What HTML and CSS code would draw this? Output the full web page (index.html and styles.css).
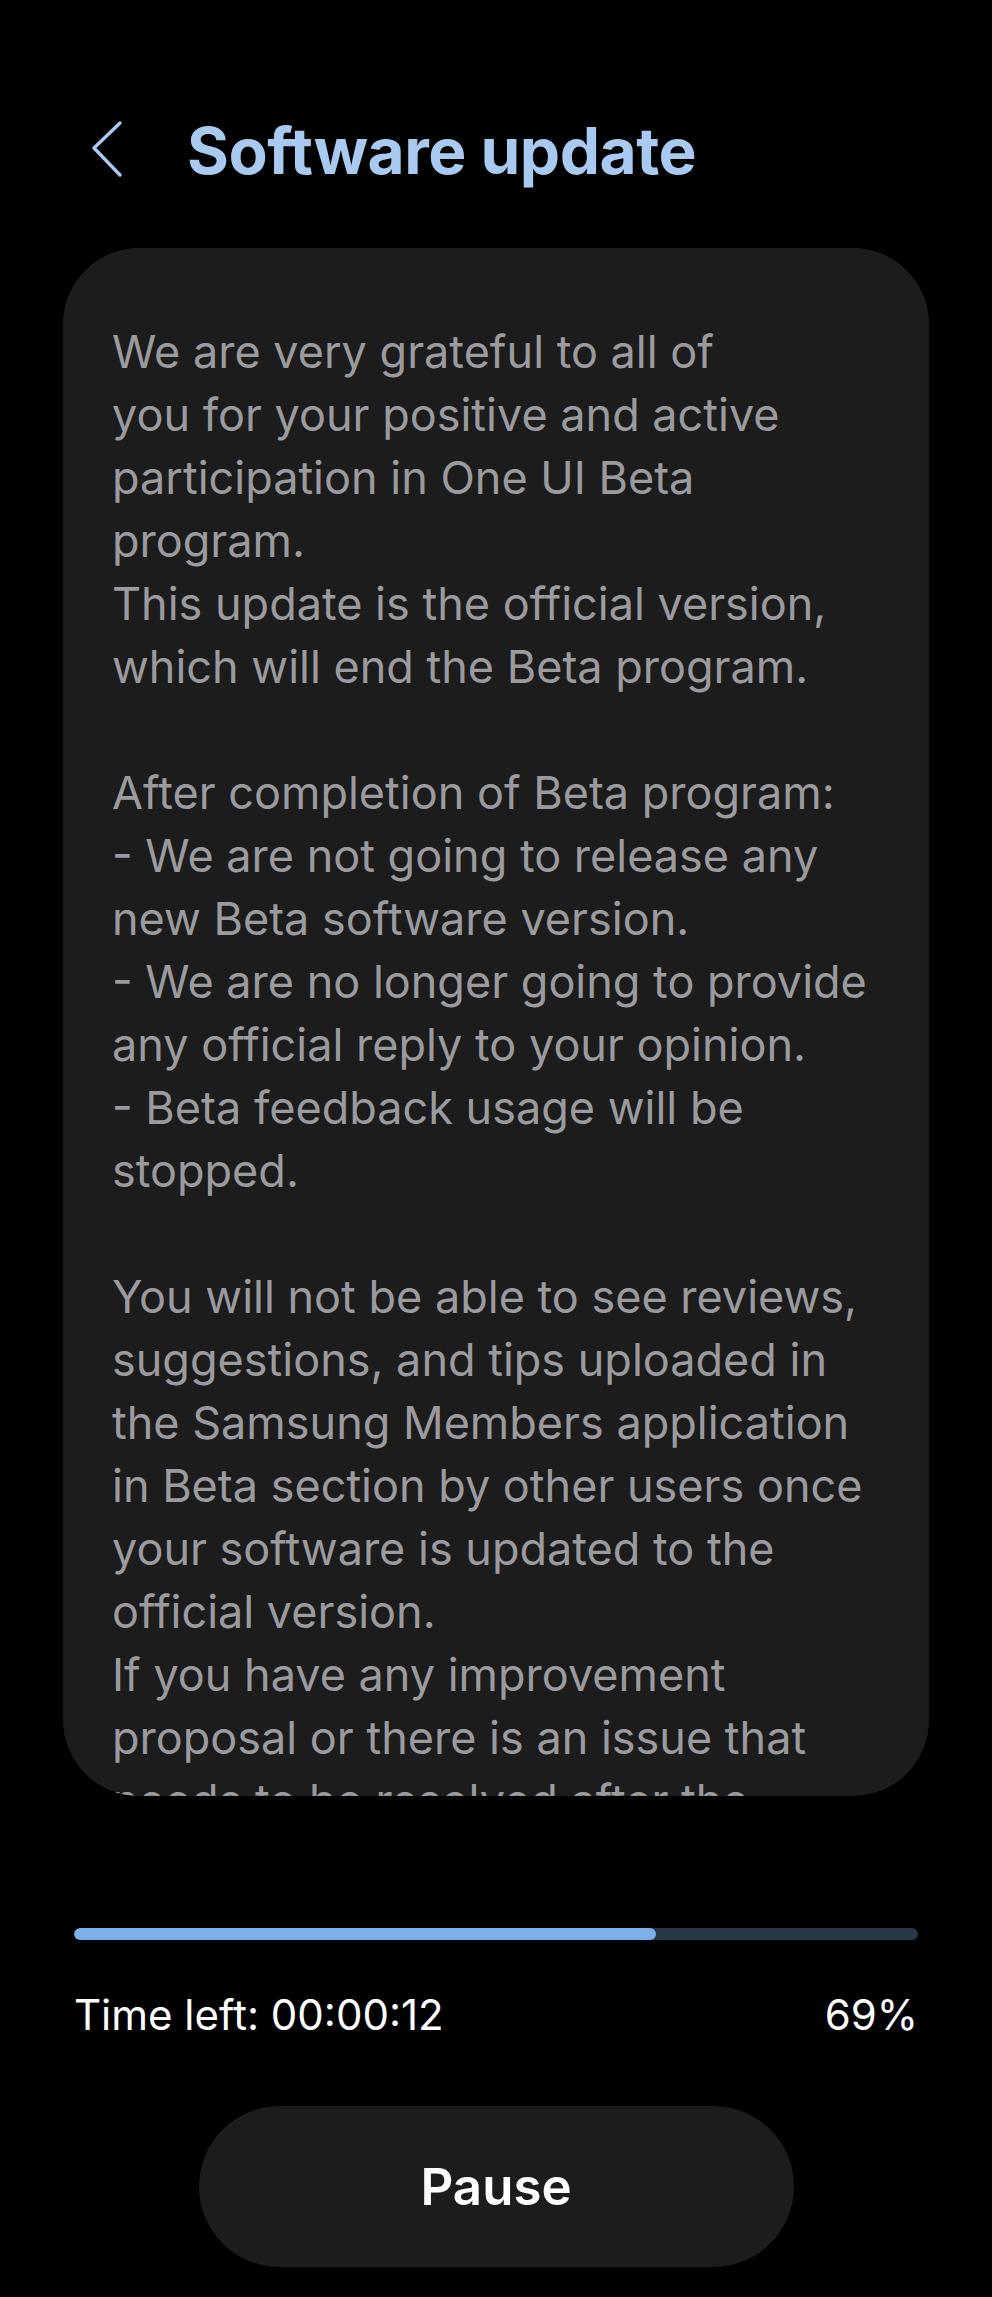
FILE: index.html
```html
<!DOCTYPE html>
<html lang="en">

<head>
    <meta charset="UTF-8">
    <meta name="viewport" content="width=device-width, initial-scale=1.0">
    <title>Software update</title>
    <link rel="stylesheet" href="styles.css">
</head>

<body>
    <div class="screen">
        <header class="app-bar">
            <button class="back-button" aria-label="Back">
                <svg width="40" height="60" viewBox="0 0 40 60">
                    <polyline points="29,3 3,28 29,55" fill="none" stroke="#a8c9f0" stroke-width="3.4" stroke-linecap="round" stroke-linejoin="round" />
                </svg>
            </button>
            <h1>Software update</h1>
        </header>

        <div class="notes-card">
            <div class="notes-text">
                <span>We are very grateful to all of</span>
                <span>you for your positive and active</span>
                <span>participation in One UI Beta</span>
                <span>program.</span>
                <span>This update is the official version,</span>
                <span>which will end the Beta program.</span>
                <span>&nbsp;</span>
                <span>After completion of Beta program:</span>
                <span>- We are not going to release any</span>
                <span>new Beta software version.</span>
                <span>- We are no longer going to provide</span>
                <span>any official reply to your opinion.</span>
                <span>- Beta feedback usage will be</span>
                <span>stopped.</span>
                <span>&nbsp;</span>
                <span>You will not be able to see reviews,</span>
                <span>suggestions, and tips uploaded in</span>
                <span>the Samsung Members application</span>
                <span>in Beta section by other users once</span>
                <span>your software is updated to the</span>
                <span>official version.</span>
                <span>If you have any improvement</span>
                <span>proposal or there is an issue that</span>
                <span>needs to be resolved after the</span>
            </div>
        </div>

        <div class="progress">
            <div class="progress-track">
                <div class="progress-fill" style="width: 69%"></div>
            </div>
            <div class="progress-info">
                <span>Time left: 00:00:12</span>
                <span>69%</span>
            </div>
        </div>

        <div class="actions">
            <button class="pause-button">Pause</button>
        </div>
    </div>
</body>

</html>
```

FILE: styles.css
```css
* {
    box-sizing: border-box;
    font-family: 'Inter', 'Roboto', sans-serif;
}

body {
    margin: 0;
    background-color: #000;
    color: #fff;
}

.screen {
    width: 992px;
    height: 2297px;
    display: flex;
    flex-direction: column;
    padding: 0 63px;
}

.app-bar {
    display: flex;
    align-items: center;
    height: 248px;
    padding-top: 52px;
    padding-left: 28px;
}

.back-button {
    background: transparent;
    border: none;
    padding: 0;
    width: 40px;
    height: 60px;
    margin-right: 56px;
    cursor: pointer;
}

.back-button svg {
    display: block;
}

h1 {
    margin: 0;
    font-size: 64px;
    font-weight: 700;
    color: #a8c9f0;
    letter-spacing: -0.5px;
}

.notes-card {
    height: 1548px;
    background-color: #1c1c1c;
    border-radius: 76px;
    overflow: hidden;
    padding: 72px 50px 0 49px;
}

.notes-text span {
    display: block;
    white-space: nowrap;
    font-size: 45px;
    line-height: 63px;
    color: #9b9b9f;
}

.progress {
    padding: 132px 11px 0 11px;
}

.progress-track {
    height: 12px;
    border-radius: 6px;
    background-color: #283848;
    overflow: hidden;
}

.progress-fill {
    height: 100%;
    border-radius: 6px;
    background-color: #7cb0e8;
}

.progress-info {
    display: flex;
    justify-content: space-between;
    margin-top: 45px;
    font-size: 42px;
    line-height: 60px;
}

.actions {
    display: flex;
    justify-content: center;
    margin-top: 61px;
}

.pause-button {
    width: 595px;
    height: 161px;
    border: none;
    border-radius: 81px;
    background-color: #1c1c1c;
    color: #fff;
    font-size: 51px;
    font-weight: 600;
    cursor: pointer;
}
```
